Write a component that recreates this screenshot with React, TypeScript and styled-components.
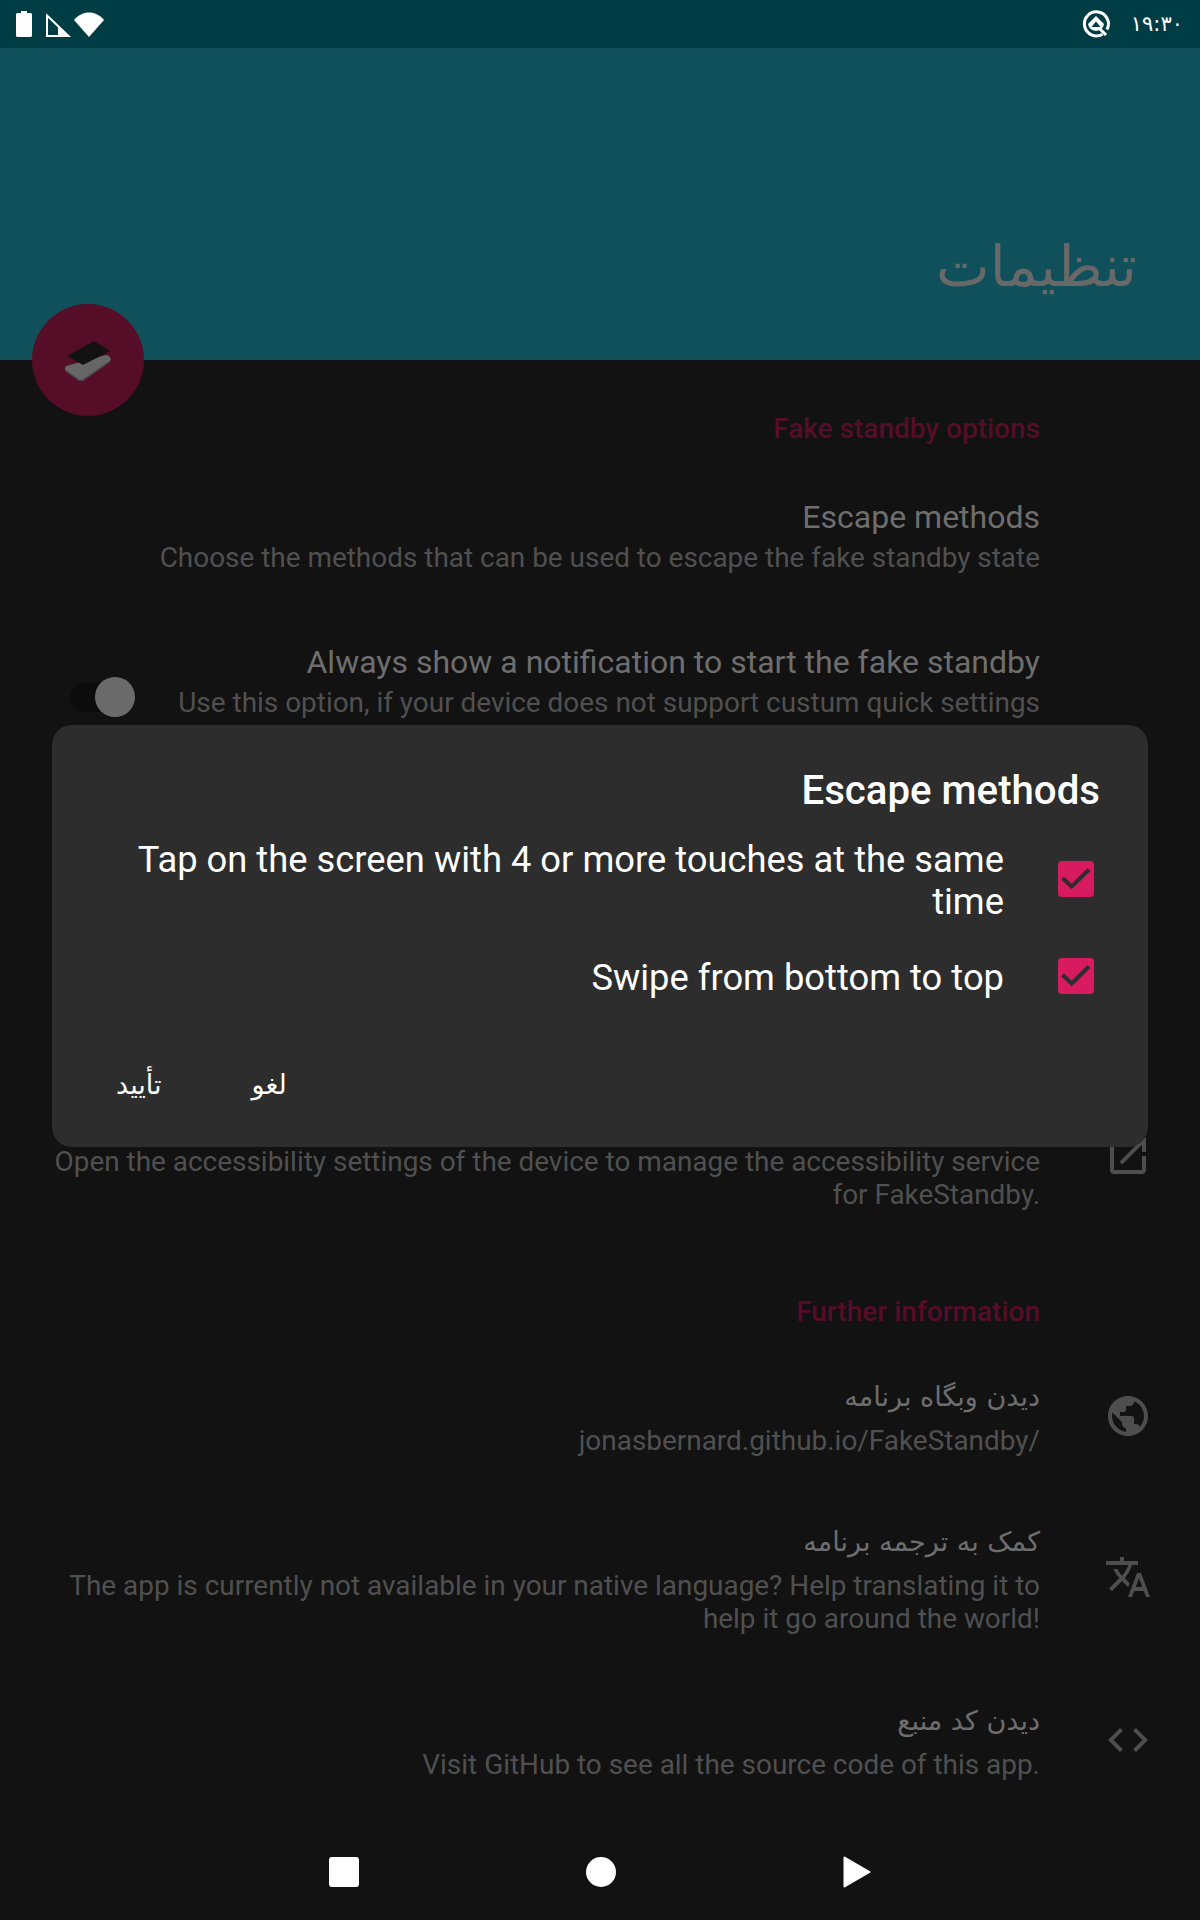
import styled, { createGlobalStyle } from 'styled-components';
import { MdCode, MdOpenInNew, MdPublic, MdTranslate } from 'react-icons/md';

const GlobalStyle = createGlobalStyle`
  html, body { margin: 0; padding: 0; background: #121212; }
  * { box-sizing: border-box; }
`;

const fontStack = `Roboto, "DejaVu Sans", sans-serif`;
const farsiStack = `"DejaVu Sans", Roboto, sans-serif`;

const CheckMark = () => (
  <svg width="36" height="36" viewBox="0 0 36 36">
    <path d="M4.5 17 L13.7 25.5 L31 8.5" fill="none" stroke="#2d2d2d" strokeWidth="4" />
  </svg>
);

const App = () => {
  return (
    <Page>
      <GlobalStyle />
      <StatusBar>
        <StatusGroup>
          <BatteryIcon viewBox="0 0 16 26">
            <path d="M5 0 H11 V2 H14.5 Q16 2 16 3.5 V24.5 Q16 26 14.5 26 H1.5 Q0 26 0 24.5 V3.5 Q0 2 1.5 2 H5 Z" fill="#fff" />
          </BatteryIcon>
          <SignalIcon viewBox="0 0 25 24">
            <path d="M1 2.5 L22.5 23 H1 Z" fill="none" stroke="#fff" strokeWidth="2" />
            <path d="M12 13 L24.5 24 H12 Z" fill="#fff" />
          </SignalIcon>
          <WifiIcon viewBox="0 0 30 25">
            <path d="M0 8 C8 -2 22 -2 30 8 L15 25 Z" fill="#fff" />
          </WifiIcon>
        </StatusGroup>
        <StatusGroup>
          <SyncIcon viewBox="0 0 28 28">
            <path d="M20.5 24.2 A12 12 0 1 1 25 19.5" fill="none" stroke="#fff" strokeWidth="3" />
            <path d="M14 6 L22 14 Q21 20 14 21 Q7 20 6 14 Z" fill="#fff" />
            <path d="M14 11.5 L18.5 17 H9.5 Z" fill="#003c43" />
            <path d="M17.5 18.5 L24 25" stroke="#fff" strokeWidth="3" />
          </SyncIcon>
          <Clock>۱۹:۳۰</Clock>
        </StatusGroup>
      </StatusBar>

      <Header>
        <HeaderTitle>تنظیمات</HeaderTitle>
      </Header>

      <Fab>
        <svg width="48" height="42" viewBox="0 0 48 42">
          <path d="M2 27 L42 16 Q45 16 47 20 Q47 22 45 23 L19 41 Q17 42 15 41 L2 32 Q0 30 2 27 Z" fill="#666" />
          <path d="M2 32 L15 41 Q17 42 19 41 L45 23" fill="none" stroke="#4a4a4a" strokeWidth="1.5" />
          <path d="M3 17 L30 2 L46 12 L19 26 Z" fill="#121212" />
        </svg>
      </Fab>

      <Settings>
        <SectionTitle>Fake standby options</SectionTitle>
        <Row $top={52}>
          <RowIcon />
          <RowText>
            <RowTitle>Escape methods</RowTitle>
            <RowSub>Choose the methods that can be used to escape the fake standby state</RowSub>
          </RowText>
        </Row>
        <Row $top={68}>
          <RowIcon />
          <RowText>
            <RowTitle>Always show a notification to start the fake standby</RowTitle>
            <RowSub>Use this option, if your device does not support custum quick settings tiles.</RowSub>
          </RowText>
          <Switch>
            <SwitchThumb />
          </Switch>
        </Row>
        <Row $top={349}>
          <RowIcon>
            <MdOpenInNew size={48} />
          </RowIcon>
          <RowText>
            <RowTitle>&nbsp;</RowTitle>
            <RowSub>Open the accessibility settings of the device to manage the accessibility service for FakeStandby.</RowSub>
          </RowText>
        </Row>

        <SectionTitle $top={85}>Further information</SectionTitle>
        <Row $top={46}>
          <RowIcon>
            <MdPublic size={48} />
          </RowIcon>
          <RowText>
            <FarsiTitle>دیدن وبگاه برنامه</FarsiTitle>
            <RowSub>jonasbernard.github.io/FakeStandby/</RowSub>
          </RowText>
        </Row>
        <Row $top={62}>
          <RowIcon>
            <MdTranslate size={48} />
          </RowIcon>
          <RowText>
            <FarsiTitle>کمک به ترجمه برنامه</FarsiTitle>
            <RowSub>The app is currently not available in your native language? Help translating it to help it go around the world!</RowSub>
          </RowText>
        </Row>
        <Row $top={63}>
          <RowIcon>
            <MdCode size={48} />
          </RowIcon>
          <RowText>
            <FarsiTitle>دیدن کد منبع</FarsiTitle>
            <RowSub>Visit GitHub to see all the source code of this app.</RowSub>
          </RowText>
        </Row>
      </Settings>

      <NavBar>
        <NavSquare />
        <NavCircle />
        <svg width="28" height="32" viewBox="0 0 28 32">
          <path d="M1.5 1.5 L26.5 16 L1.5 30.5 Z" fill="#fff" stroke="#fff" strokeWidth="2" strokeLinejoin="round" />
        </svg>
      </NavBar>

      <Dialog>
        <DialogTitle>Escape methods</DialogTitle>
        <Option>
          <Checkbox>
            <CheckMark />
          </Checkbox>
          <OptionLabel>Tap on the screen with 4 or more touches at the same time</OptionLabel>
        </Option>
        <Option>
          <Checkbox>
            <CheckMark />
          </Checkbox>
          <OptionLabel>Swipe from bottom to top</OptionLabel>
        </Option>
        <DialogActions>
          <ActionButton>تأیید</ActionButton>
          <ActionButton>لغو</ActionButton>
        </DialogActions>
      </Dialog>
    </Page>
  );
};

const Page = styled.div`
  position: relative;
  width: 1200px;
  height: 1920px;
  overflow: hidden;
  display: flex;
  flex-direction: column;
  background: #121212;
  font-family: ${fontStack};
`;

const StatusBar = styled.div`
  height: 48px;
  background: #003c43;
  display: flex;
  align-items: center;
  justify-content: space-between;
  padding: 0 17px 0 16px;
`;

const StatusGroup = styled.div`
  display: flex;
  align-items: center;
`;

const BatteryIcon = styled.svg`
  width: 16px;
  height: 26px;
`;

const SignalIcon = styled.svg`
  width: 25px;
  height: 24px;
  margin-left: 14px;
  margin-top: 1px;
`;

const WifiIcon = styled.svg`
  width: 30px;
  height: 25px;
  margin-left: 3px;
`;

const SyncIcon = styled.svg`
  width: 28px;
  height: 28px;
  margin-right: 21px;
`;

const Clock = styled.span`
  font-family: ${farsiStack};
  font-size: 21px;
  color: #fff;
`;

const Header = styled.div`
  height: 312px;
  background: #10505a;
  display: flex;
  justify-content: flex-end;
  align-items: flex-end;
  padding: 0 63px 61px 0;
`;

const HeaderTitle = styled.h1`
  margin: 0;
  font-family: ${farsiStack};
  font-weight: 400;
  font-size: 57px;
  color: #686868;
  direction: rtl;
`;

const Fab = styled.div`
  position: absolute;
  left: 32px;
  top: 304px;
  width: 112px;
  height: 112px;
  border-radius: 50%;
  background: #560d27;
  display: flex;
  align-items: center;
  justify-content: center;
`;

const Settings = styled.div`
  flex: 1;
  padding-top: 53px;
  display: flex;
  flex-direction: column;
`;

const SectionTitle = styled.div<{ $top?: number }>`
  margin-top: ${(p) => p.$top ?? 0}px;
  padding-right: 160px;
  text-align: right;
  font-size: 28px;
  line-height: 32px;
  font-weight: 500;
  color: #560d27;
`;

const Row = styled.div<{ $top: number }>`
  margin-top: ${(p) => p.$top}px;
  display: flex;
  flex-direction: row-reverse;
  align-items: center;
  padding-left: 48px;
`;

const RowIcon = styled.div`
  width: 160px;
  flex-shrink: 0;
  display: flex;
  justify-content: center;
  padding-left: 16px;
  color: #4e4e4e;
`;

const RowText = styled.div`
  flex: 1;
  min-width: 0;
  text-align: right;
`;

const RowTitle = styled.div`
  font-size: 32px;
  line-height: 40px;
  margin-bottom: 4px;
  color: #6e6e6e;
`;

const FarsiTitle = styled.div`
  font-family: ${farsiStack};
  direction: rtl;
  font-size: 27px;
  line-height: 46px;
  margin-bottom: 4px;
  color: #6e6e6e;
`;

const RowSub = styled.div`
  font-size: 27.93px;
  line-height: 33px;
  color: #505050;
`;

const Switch = styled.div`
  position: relative;
  flex-shrink: 0;
  width: 50px;
  height: 29px;
  border-radius: 15px;
  background: #0c0c0c;
  margin-left: 22px;
  margin-right: 40px;
`;

const SwitchThumb = styled.div`
  position: absolute;
  top: -6px;
  left: 25px;
  width: 40px;
  height: 40px;
  border-radius: 50%;
  background: #6b6b6b;
`;

const NavBar = styled.div`
  height: 96px;
  display: flex;
  align-items: center;
  justify-content: center;
  gap: 227px;
`;

const NavSquare = styled.div`
  width: 30px;
  height: 30px;
  border-radius: 3px;
  background: #fff;
`;

const NavCircle = styled.div`
  width: 30px;
  height: 30px;
  border-radius: 50%;
  background: #fff;
`;

const Dialog = styled.div`
  position: absolute;
  left: 52px;
  top: 725px;
  width: 1096px;
  height: 422px;
  border-radius: 20px;
  background: #2d2d2d;
  padding: 42px 48px 0 0;
  display: flex;
  flex-direction: column;
`;

const DialogTitle = styled.div`
  text-align: right;
  color: #fff;
  font-size: 40.2px;
  line-height: 48px;
  font-weight: 500;
  margin-bottom: 24px;
`;

const Option = styled.div`
  display: flex;
  flex-direction: row-reverse;
  align-items: center;
  margin-bottom: 34px;
`;

const Checkbox = styled.div`
  width: 36px;
  height: 36px;
  border-radius: 4px;
  background: #d81b60;
  flex-shrink: 0;
  margin: 2px 6px 6px 54px;
  display: flex;
  align-items: center;
  justify-content: center;
`;

const OptionLabel = styled.div`
  flex: 1;
  padding-left: 48px;
  text-align: right;
  color: #fff;
  font-size: 36.35px;
  line-height: 41.5px;
`;

const DialogActions = styled.div`
  margin-top: auto;
  padding: 0 0 47px 64px;
  display: flex;
  gap: 90px;
`;

const ActionButton = styled.div`
  font-family: ${farsiStack};
  direction: rtl;
  color: #fff;
  font-size: 27px;
`;

export default App;
